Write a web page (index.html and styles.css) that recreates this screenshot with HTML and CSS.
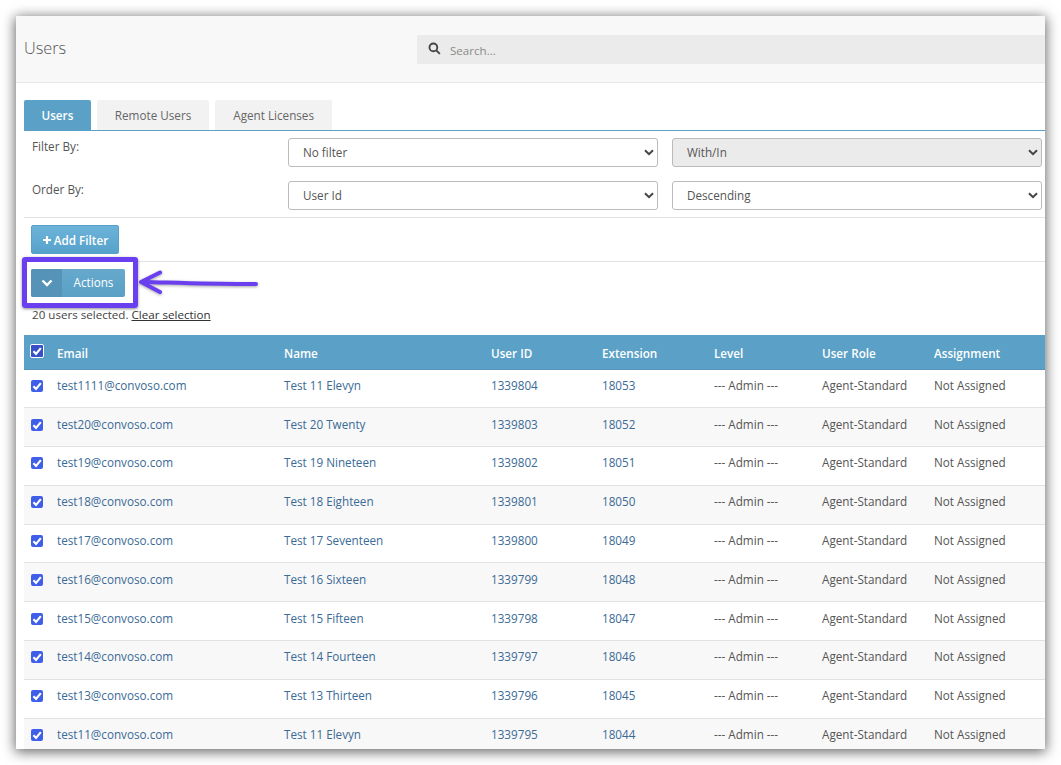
FILE: index.html
```html
<!DOCTYPE html>
<html lang="en">
<head>
<meta charset="utf-8">
<title>Users</title>
<link rel="stylesheet" href="styles.css">
</head>
<body>
<div class="window">
  <header class="topbar">
    <h1 class="title">Users</h1>
    <div class="search">
      <svg class="search-icon" viewBox="0 0 14 14"><circle cx="5.8" cy="5.8" r="4.2"/><path d="M9 9l3.8 3.8"/></svg>
      <span>Search...</span>
    </div>
  </header>
  <nav class="tabs">
    <a class="tab active">Users</a>
    <a class="tab">Remote Users</a>
    <a class="tab">Agent Licenses</a>
  </nav>
  <section class="filters">
    <label class="filter-label">Filter By:</label>
    <div class="select"><span>No filter</span><svg viewBox="0 0 10 7"><path d="M1 1.2l4 4 4-4"/></svg></div>
    <div class="select disabled"><span>With/In</span><svg viewBox="0 0 10 7"><path d="M1 1.2l4 4 4-4"/></svg></div>
    <label class="filter-label">Order By:</label>
    <div class="select"><span>User Id</span><svg viewBox="0 0 10 7"><path d="M1 1.2l4 4 4-4"/></svg></div>
    <div class="select"><span>Descending</span><svg viewBox="0 0 10 7"><path d="M1 1.2l4 4 4-4"/></svg></div>
  </section>
  <div class="bar add-bar">
    <button class="btn-add"><svg viewBox="0 0 10 10"><path d="M5 1v8M1 5h8"/></svg>Add Filter</button>
  </div>
  <div class="bar actions-bar">
    <button class="btn-actions"><span class="caret"><svg viewBox="0 0 12 8"><path d="M1.5 1.5L6 6l4.5-4.5"/></svg></span><span class="label">Actions</span></button>
  </div>
  <p class="selection">20 users selected. <a>Clear selection</a></p>
  <table class="users">
    <thead>
      <tr><th><span class="check head"><svg viewBox="0 0 10 10"><path d="M2 5.2l2.2 2.2L8.2 2.6"/></svg></span></th><th>Email</th><th>Name</th><th>User ID</th><th>Extension</th><th>Level</th><th>User Role</th><th>Assignment</th></tr>
    </thead>
    <tbody>
      <tr><td><span class="check"><svg viewBox="0 0 10 10"><path d="M2 5.2l2.2 2.2L8.2 2.6"/></svg></span></td><td><a>test1111@convoso.com</a></td><td><a>Test 11 Elevyn</a></td><td><a>1339804</a></td><td><a>18053</a></td><td>--- Admin ---</td><td>Agent-Standard</td><td>Not Assigned</td></tr>
      <tr><td><span class="check"><svg viewBox="0 0 10 10"><path d="M2 5.2l2.2 2.2L8.2 2.6"/></svg></span></td><td><a>test20@convoso.com</a></td><td><a>Test 20 Twenty</a></td><td><a>1339803</a></td><td><a>18052</a></td><td>--- Admin ---</td><td>Agent-Standard</td><td>Not Assigned</td></tr>
      <tr><td><span class="check"><svg viewBox="0 0 10 10"><path d="M2 5.2l2.2 2.2L8.2 2.6"/></svg></span></td><td><a>test19@convoso.com</a></td><td><a>Test 19 Nineteen</a></td><td><a>1339802</a></td><td><a>18051</a></td><td>--- Admin ---</td><td>Agent-Standard</td><td>Not Assigned</td></tr>
      <tr><td><span class="check"><svg viewBox="0 0 10 10"><path d="M2 5.2l2.2 2.2L8.2 2.6"/></svg></span></td><td><a>test18@convoso.com</a></td><td><a>Test 18 Eighteen</a></td><td><a>1339801</a></td><td><a>18050</a></td><td>--- Admin ---</td><td>Agent-Standard</td><td>Not Assigned</td></tr>
      <tr><td><span class="check"><svg viewBox="0 0 10 10"><path d="M2 5.2l2.2 2.2L8.2 2.6"/></svg></span></td><td><a>test17@convoso.com</a></td><td><a>Test 17 Seventeen</a></td><td><a>1339800</a></td><td><a>18049</a></td><td>--- Admin ---</td><td>Agent-Standard</td><td>Not Assigned</td></tr>
      <tr><td><span class="check"><svg viewBox="0 0 10 10"><path d="M2 5.2l2.2 2.2L8.2 2.6"/></svg></span></td><td><a>test16@convoso.com</a></td><td><a>Test 16 Sixteen</a></td><td><a>1339799</a></td><td><a>18048</a></td><td>--- Admin ---</td><td>Agent-Standard</td><td>Not Assigned</td></tr>
      <tr><td><span class="check"><svg viewBox="0 0 10 10"><path d="M2 5.2l2.2 2.2L8.2 2.6"/></svg></span></td><td><a>test15@convoso.com</a></td><td><a>Test 15 Fifteen</a></td><td><a>1339798</a></td><td><a>18047</a></td><td>--- Admin ---</td><td>Agent-Standard</td><td>Not Assigned</td></tr>
      <tr><td><span class="check"><svg viewBox="0 0 10 10"><path d="M2 5.2l2.2 2.2L8.2 2.6"/></svg></span></td><td><a>test14@convoso.com</a></td><td><a>Test 14 Fourteen</a></td><td><a>1339797</a></td><td><a>18046</a></td><td>--- Admin ---</td><td>Agent-Standard</td><td>Not Assigned</td></tr>
      <tr><td><span class="check"><svg viewBox="0 0 10 10"><path d="M2 5.2l2.2 2.2L8.2 2.6"/></svg></span></td><td><a>test13@convoso.com</a></td><td><a>Test 13 Thirteen</a></td><td><a>1339796</a></td><td><a>18045</a></td><td>--- Admin ---</td><td>Agent-Standard</td><td>Not Assigned</td></tr>
      <tr><td><span class="check"><svg viewBox="0 0 10 10"><path d="M2 5.2l2.2 2.2L8.2 2.6"/></svg></span></td><td><a>test11@convoso.com</a></td><td><a>Test 11 Elevyn</a></td><td><a>1339795</a></td><td><a>18044</a></td><td>--- Admin ---</td><td>Agent-Standard</td><td>Not Assigned</td></tr>
    </tbody>
  </table>
  <div class="highlight"></div>
  <svg class="arrow" viewBox="0 0 130 30"><path d="M124 14C90 14.5 50 13 12 12"/><path d="M28 2.5L9 12 28 22"/></svg>
</div>
</body>
</html>
```
FILE: styles.css
```css
* { box-sizing: border-box; }
html, body { margin: 0; height: 100%; background: #fff; overflow: hidden; }
body { padding: 16px; font-family: "Open Sans", sans-serif; font-size: 11.7px; color: #555; }
.window {
  position: relative;
  width: 1029px;
  height: 733px;
  background: #fff;
  overflow: hidden;
}
html::before {
  content: "";
  position: fixed;
  left: 16px; top: 16px;
  width: 1029px; height: 733px;
  box-shadow: 0 2px 12px 1px rgba(0,0,0,.6);
}
.topbar {
  display: flex;
  align-items: flex-start;
  height: 67px;
  background: #f8f8f8;
  border-bottom: 1px solid #e7e7e7;
}
.title {
  margin: 22px 0 0 8px;
  width: 393px;
  font-size: 16.3px;
  line-height: 20px;
  font-weight: 300;
  color: #555;
}
.search {
  flex: 1;
  height: 29px;
  margin-top: 19px;
  background: #ebebeb;
  display: flex;
  align-items: center;
  padding-left: 11px;
  color: #8a8a8a;
  font-size: 11.6px;
}
.search-icon { width: 13px; height: 13px; margin: -3px 9px 0 0; fill: none; stroke: #444; stroke-width: 2; }
.search span { padding-top: 1px; }
.tabs {
  display: flex;
  gap: 6px;
  margin: 17px 0 0 8px;
  height: 31px;
  border-bottom: 1px solid #5ba0c6;
}
.tab {
  height: 30px;
  padding: 0 18px;
  line-height: 30px;
  background: #f2f2f2;
  border-radius: 2px 2px 0 0;
  color: #666;
}
.tab.active { background: #5ba0c6; color: #fff; font-weight: 600; padding: 0 17.5px; }
.filters {
  display: grid;
  grid-template-columns: 242px 370px 370px;
  column-gap: 14px;
  row-gap: 14px;
  padding: 7px 0 7px 8px;
  margin-left: 8px;
  border-bottom: 1px solid #e2e2e2;
}
.filter-label { line-height: 17px; color: #555; }
.select {
  position: relative;
  height: 29px;
  border: 1px solid #bbb;
  border-radius: 3px;
  padding-left: 14px;
  line-height: 26px;
  background: #fff;
}
.select svg {
  position: absolute;
  right: 3px; top: 10px;
  width: 10px; height: 7px;
  fill: none; stroke: #444; stroke-width: 2;
}
.select.disabled { background: #ebebeb; }
.bar { margin-left: 8px; padding-left: 7px; }
.add-bar { height: 44px; padding-top: 7px; border-bottom: 1px solid #e2e2e2; }
.btn-add {
  display: flex;
  align-items: center;
  justify-content: center;
  width: 88px;
  height: 29px;
  padding: 0;
  font: 600 11.7px "Open Sans", sans-serif;
  color: #fff;
  background: linear-gradient(#6cb3d9, #57a2cb);
  border: 1px solid #56a0c9;
  border-radius: 2px;
}
.btn-add svg { width: 10px; height: 10px; margin-right: 2px; fill: none; stroke: #fff; stroke-width: 2.2; }
.actions-bar { padding-top: 7px; height: 36px; }
.btn-actions {
  display: flex;
  width: 94px;
  height: 28px;
  padding: 0;
  border: 0;
  border-radius: 2px;
  overflow: hidden;
  font: 11.7px "Open Sans", sans-serif;
  color: #fff;
  background: linear-gradient(#66a9cd, #5aa0c5);
}
.caret {
  width: 31px;
  height: 28px;
  display: flex;
  align-items: center;
  justify-content: center;
  background: #5594b8;
}
.caret svg { width: 12px; height: 8px; fill: none; stroke: #fff; stroke-width: 2.4; }
.btn-actions .label { flex: 1; line-height: 27px; text-align: center; }
.selection { margin: 8px 0 0 16px; height: 17px; line-height: 17px; color: #444; font-size: 11.6px; }
.selection a { text-decoration: underline; color: #333; }
.users {
  margin: 12px 0 0 8px;
  width: 1021px;
  table-layout: fixed;
  border-collapse: collapse;
}
.users th:nth-child(1) { width: 25px; }
.users th:nth-child(2) { width: 227px; }
.users th:nth-child(3) { width: 207px; }
.users th:nth-child(4) { width: 111px; }
.users th:nth-child(5) { width: 112px; }
.users th:nth-child(6) { width: 108px; }
.users th:nth-child(7) { width: 112px; }
.users thead tr { height: 34px; background: #5ba0c6; }
.users th {
  padding: 2px 0 0 8px;
  text-align: left;
  font-weight: 600;
  color: #fff;
  border-bottom: 1px solid #5594b8;
}
.users td { height: 38.8px; padding: 0 0 7px 8px; border-bottom: 1px solid #e2e2e2; color: #555; }
.users tbody tr:nth-child(even) { background: #f8f8f8; }
.users a { color: #3a6a96; }
.users th:first-child { padding-left: 7px; }
.users td:first-child { padding: 0 0 5px 7px; }
.check {
  display: block;
  width: 12px;
  height: 12px;
  background: #3f5fe8;
  border-radius: 2px;
}
.check svg { display: block; width: 12px; height: 12px; fill: none; stroke: #fff; stroke-width: 1.8; }
.check.head { width: 14px; height: 14px; margin: -3px 0 0 -1px; border: 1px solid #fff; background: #3550c8; }
.highlight {
  position: absolute;
  left: 6px; top: 241px;
  width: 116px; height: 51px;
  border: 5px solid #6a3ff0;
  border-radius: 3px;
  box-shadow: 0 1px 3px rgba(0,0,0,.45);
}
.arrow {
  position: absolute;
  left: 116px; top: 254px;
  width: 130px; height: 30px;
  fill: none;
  stroke: #6a3ff0;
  stroke-width: 4;
  stroke-linecap: round;
  stroke-linejoin: round;
  filter: drop-shadow(0 1px 1.5px rgba(0,0,0,.35));
}
```
